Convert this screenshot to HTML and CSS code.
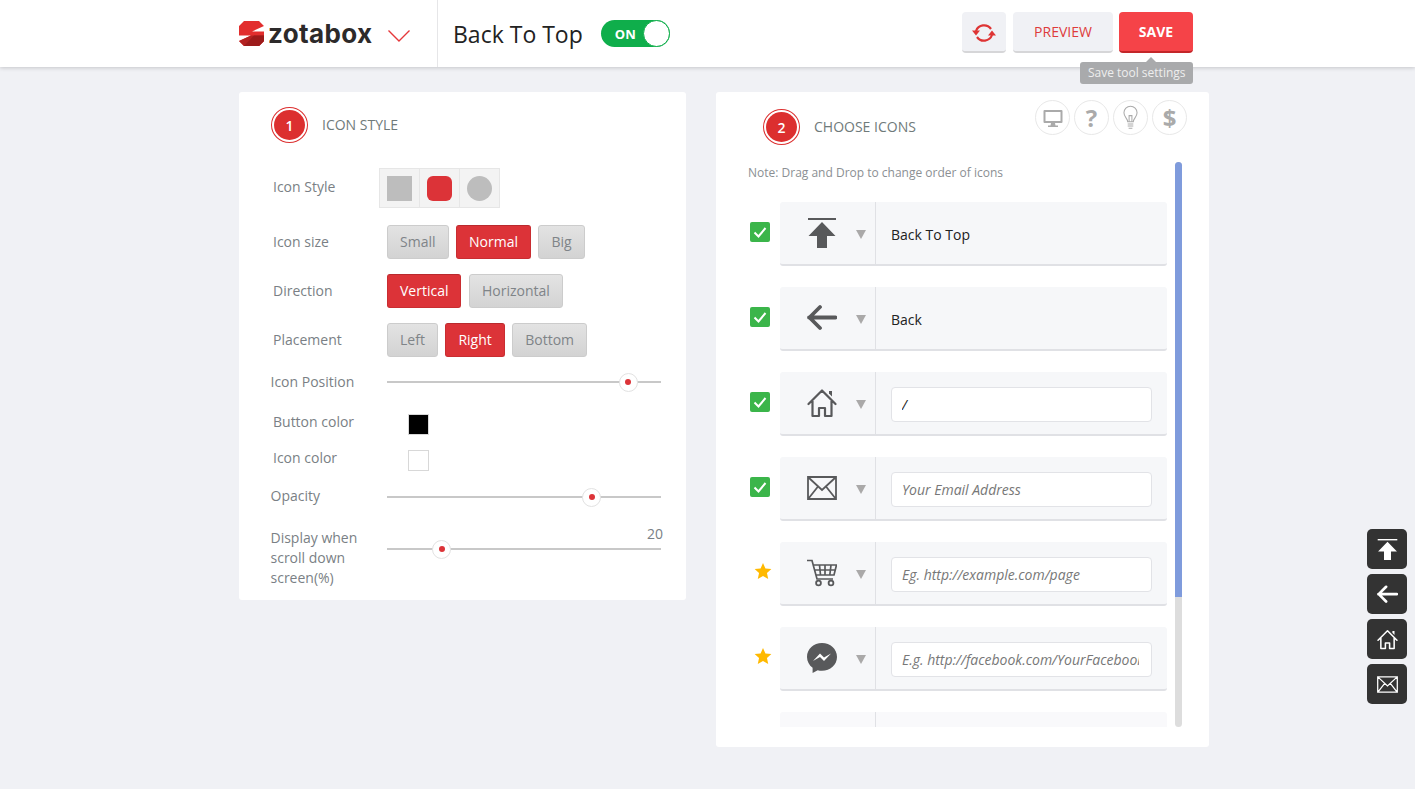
FILE: index.html
```html
<!DOCTYPE html>
<html lang="en">
<head>
<meta charset="utf-8">
<title>Back To Top</title>
<link rel="stylesheet" href="styles.css">
</head>
<body>
<svg class="defs" aria-hidden="true">
  <symbol id="i-top" viewBox="0 0 30 30"><rect x="1" y="0" width="28" height="2"/><path d="M15 4 L28.5 18 H20 V30 H10 V18 H1.500Z"/></symbol>
  <symbol id="i-back" viewBox="0 0 30 30"><path d="M2 14.500 H28.500 M13 4 L2.500 14.500 L13 25" fill="none" stroke="currentColor" stroke-width="3.800" stroke-linecap="round" stroke-linejoin="round"/></symbol>
  <symbol id="i-home" viewBox="0 0 30 30"><path d="M1.500 16 L15 2.500 L28.500 16 M5.500 13 V28 H12 V20 H18 V28 H24.500 V13" fill="none" stroke="currentColor" stroke-width="2.200" stroke-linejoin="round" stroke-linecap="round"/><path d="M22 3 H25 V8.500 L22 5.500Z"/></symbol>
  <symbol id="i-mail" viewBox="0 0 30 30"><path d="M1 4 H29 V26 H1Z M1.500 4.500 L15 17 L28.500 4.500 M1.500 25.500 L11 13.500 M28.500 25.500 L19 13.500" fill="none" stroke="currentColor" stroke-width="1.800"/></symbol>
  <symbol id="i-cart" viewBox="0 0 30 30"><path d="M0 2.500 H5 L10 21 H26 M6 7 H29.500 L27 17 H8.500 M12.500 7 L13.500 17 M18 7 V17 M24 7 L22.800 17 M7.500 12 H28" fill="none" stroke="currentColor" stroke-width="1.700"/><circle cx="11.500" cy="25" r="2.400" fill="none" stroke="currentColor" stroke-width="1.800"/><circle cx="24" cy="25" r="2.400" fill="none" stroke="currentColor" stroke-width="1.800"/></symbol>
  <symbol id="i-msg" viewBox="0 0 30 30"><path d="M15 0 C6.700 0 0 6.200 0 13.900 C0 18.300 2.200 22.100 5.600 24.700 V30 L10.700 27.200 C12 27.600 13.500 27.800 15 27.800 C23.300 27.800 30 21.600 30 13.900 C30 6.200 23.300 0 15 0Z"/><path d="M6 18 L13 10.500 L17 14.500 L24 10.500 L17 18 L13 14 Z" fill="#fff"/></symbol>
  <symbol id="i-star" viewBox="0 0 20 20"><path d="M10 1 L12.700 7.100 L19.300 7.800 L14.400 12.300 L15.800 18.900 L10 15.500 L4.200 18.900 L5.600 12.300 L0.700 7.800 L7.300 7.100Z"/></symbol>
</svg>

<header class="topbar">
  <div class="brand">
    <svg class="logo-mark" viewBox="0 0 25 25"><path d="M5 0 H20 L25 5 L13 10.500 H25 V20 L20 25 H5 L0 20 L12 14.500 H0 V5Z" fill="#e22e2e"/><path d="M5 25 L0 20 L12 14.500 H25 V20 L20 25Z" fill="#b32222"/><path d="M5 25 L15 14.500 H25 V20 L20 25Z" fill="#9c1b1b"/></svg>
    <span class="logo-text">zotabox</span>
    <svg class="logo-caret" viewBox="0 0 22 12"><path d="M0.500 0.500 L11 11 L21.500 0.500" fill="none" stroke="#e5383b" stroke-width="1.400"/></svg>
  </div>
  <div class="tool">
    <span class="tool-name">Back To Top</span>
    <div class="toggle"><span class="toggle-label">ON</span><span class="toggle-knob"></span></div>
  </div>
  <div class="actions">
    <button class="act act-icon" type="button">
      <svg viewBox="0 0 24 22" width="24" height="22"><path d="M4 9 A8.500 8.500 0 0 1 19 7 M20 13 A8.500 8.500 0 0 1 5 15" fill="none" stroke="#de3434" stroke-width="2.200"/><path d="M0 8.500 H8 L4 13.500Z M16 13.500 H24 L20 8.500Z" fill="#de3434"/></svg>
    </button>
    <button class="act act-preview" type="button">PREVIEW</button>
    <div class="save-wrap">
      <button class="act act-save" type="button">SAVE</button>
      <div class="tip">Save tool settings</div>
    </div>
  </div>
</header>

<main class="page">
  <section class="card card-left">
    <div class="step"><span class="step-num">1</span><h2 class="step-title">ICON STYLE</h2></div>

    <div class="row row-style">
      <span class="lbl lbl-style">Icon Style</span>
      <div class="styles">
        <span class="style-cell"><i class="shape shape-square"></i></span>
        <span class="style-cell"><i class="shape shape-round"></i></span>
        <span class="style-cell"><i class="shape shape-circle"></i></span>
      </div>
    </div>

    <div class="row row-btn row-first">
      <span class="lbl">Icon size</span>
      <div class="group"><button class="opt" type="button">Small</button><button class="opt on" type="button">Normal</button><button class="opt" type="button">Big</button></div>
    </div>
    <div class="row row-btn">
      <span class="lbl">Direction</span>
      <div class="group"><button class="opt on" type="button">Vertical</button><button class="opt" type="button">Horizontal</button></div>
    </div>
    <div class="row row-btn">
      <span class="lbl">Placement</span>
      <div class="group"><button class="opt" type="button">Left</button><button class="opt on" type="button">Right</button><button class="opt" type="button">Bottom</button></div>
    </div>

    <div class="row row-slider row-position">
      <span class="lbl-slider">Icon Position</span>
      <div class="track"><span class="thumb" style="left:88%"></span></div>
    </div>

    <div class="row row-color row-button-color">
      <span class="lbl lbl-color">Button color</span><span class="swatch swatch-black"></span>
    </div>
    <div class="row row-color row-icon-color">
      <span class="lbl lbl-color">Icon color</span><span class="swatch"></span>
    </div>

    <div class="row row-slider row-opacity">
      <span class="lbl-slider">Opacity</span>
      <div class="track"><span class="thumb" style="left:74.8%"></span></div>
    </div>

    <div class="row row-slider row-display">
      <span class="lbl-slider">Display when scroll down screen(%)</span>
      <div class="track track-top"><span class="value">20</span><span class="thumb" style="left:20%"></span></div>
    </div>
  </section>

  <section class="card card-right">
    <div class="right-head">
      <div class="step step-right"><span class="step-num">2</span><h2 class="step-title">CHOOSE ICONS</h2></div>
      <div class="helps">
        <span class="help"><svg viewBox="0 0 20 20" width="20" height="20"><path d="M1.500 2 H18.500 Q19.500 2 19.500 3 V14 Q19.500 15 18.500 15 H1.500 Q0.500 15 0.500 14 V3 Q0.500 2 1.500 2Z M2.500 4 V13 H17.500 V4Z" fill="#aaa" fill-rule="evenodd"/><path d="M8 15 H12 L12.500 17.500 H15 V19 H5 V17.500 H7.500Z" fill="#aaa"/></svg></span>
        <span class="help help-glyph">?</span>
        <span class="help"><svg viewBox="0 0 16 26" width="15" height="25"><path d="M5 17.500 C5 14 1 12.500 1 8 A7 7 0 0 1 15 8 C15 12.500 11 14 11 17.500Z M6.500 17 V11 H9.500 V17 M5 20 H11 M5 22 H11 M6 24.500 H10" fill="none" stroke="#aaa" stroke-width="1.100"/></svg></span>
        <span class="help help-glyph">$</span>
      </div>
    </div>

    <div class="scroll-area">
      <div class="scroll-content">
        <p class="note">Note: Drag and Drop to change order of icons</p>
        <div class="items">
          <div class="item">
            <span class="mark check"><svg viewBox="0 0 20 20" width="20" height="20"><path d="M4.500 10.500 L8.500 14.500 L15.500 6" fill="none" stroke="#fff" stroke-width="2"/></svg></span>
            <div class="bar">
              <div class="bar-icon"><svg class="ico"><use href="#i-top"/></svg><span class="tri"></span></div>
              <div class="bar-field"><span class="field-text">Back To Top</span></div>
            </div>
          </div>
          <div class="item">
            <span class="mark check"><svg viewBox="0 0 20 20" width="20" height="20"><path d="M4.500 10.500 L8.500 14.500 L15.500 6" fill="none" stroke="#fff" stroke-width="2"/></svg></span>
            <div class="bar">
              <div class="bar-icon"><svg class="ico"><use href="#i-back"/></svg><span class="tri"></span></div>
              <div class="bar-field"><span class="field-text">Back</span></div>
            </div>
          </div>
          <div class="item">
            <span class="mark check"><svg viewBox="0 0 20 20" width="20" height="20"><path d="M4.500 10.500 L8.500 14.500 L15.500 6" fill="none" stroke="#fff" stroke-width="2"/></svg></span>
            <div class="bar">
              <div class="bar-icon"><svg class="ico"><use href="#i-home"/></svg><span class="tri"></span></div>
              <div class="bar-field"><input class="input input-filled" value="/"></div>
            </div>
          </div>
          <div class="item">
            <span class="mark check"><svg viewBox="0 0 20 20" width="20" height="20"><path d="M4.500 10.500 L8.500 14.500 L15.500 6" fill="none" stroke="#fff" stroke-width="2"/></svg></span>
            <div class="bar">
              <div class="bar-icon"><svg class="ico"><use href="#i-mail"/></svg><span class="tri"></span></div>
              <div class="bar-field"><input class="input" placeholder="Your Email Address"></div>
            </div>
          </div>
          <div class="item">
            <span class="mark star"><svg class="star-ico"><use href="#i-star"/></svg></span>
            <div class="bar">
              <div class="bar-icon"><svg class="ico"><use href="#i-cart"/></svg><span class="tri"></span></div>
              <div class="bar-field"><input class="input" placeholder="Eg. http://example.com/page"></div>
            </div>
          </div>
          <div class="item">
            <span class="mark star"><svg class="star-ico"><use href="#i-star"/></svg></span>
            <div class="bar">
              <div class="bar-icon"><svg class="ico"><use href="#i-msg"/></svg><span class="tri"></span></div>
              <div class="bar-field"><input class="input" placeholder="E.g. http://facebook.com/YourFacebookPage"></div>
            </div>
          </div>
          <div class="item">
            <span class="mark"></span>
            <div class="bar bar-faded">
              <div class="bar-icon"></div>
              <div class="bar-field"></div>
            </div>
          </div>
        </div>
      </div>
      <div class="scrollbar"><div class="scrollbar-thumb"></div></div>
    </div>
  </section>
</main>

<nav class="float-icons">
  <a class="float-btn"><svg class="float-ico"><use href="#i-top"/></svg></a>
  <a class="float-btn"><svg class="float-ico"><use href="#i-back"/></svg></a>
  <a class="float-btn"><svg class="float-ico"><use href="#i-home"/></svg></a>
  <a class="float-btn"><svg class="float-ico"><use href="#i-mail"/></svg></a>
</nav>
</body>
</html>
```

FILE: styles.css
```css
* { box-sizing: border-box; }
html, body { margin: 0; height: 100%; }
body {
  background: #f0f1f5;
  font-family: "Open Sans", "Noto Sans", sans-serif;
  font-size: 14px;
  color: #7a7f85;
  overflow: hidden;
}
.defs { display: none; }

/* Top bar */
.topbar {
  display: flex;
  align-items: stretch;
  height: 67px;
  padding: 0 222px 0 239px;
  background: #fff;
  box-shadow: 0 1px 4px rgba(0, 0, 0, .18);
  position: relative;
  z-index: 2;
}
.brand {
  display: flex;
  align-items: center;
  width: 199px;
  border-right: 1px solid #e6e6e8;
}
.logo-mark { width: 25px; height: 25px; flex: none; }
.logo-text {
  margin-left: 4px;
  font-family: "Inter", sans-serif;
  font-weight: 700;
  font-size: 26px;
  letter-spacing: .35px;
  color: #2d2a2a;
}
.logo-caret { width: 22px; height: 12px; margin: 4px 0 0 16px; }
.tool { display: flex; align-items: center; padding-left: 15px; }
.tool-name { font-size: 23px; color: #222; }
.toggle {
  display: flex;
  align-items: center;
  justify-content: space-between;
  width: 69px;
  height: 27px;
  margin-left: 18px;
  padding-left: 14px;
  background: #0fae4b;
  border-radius: 14px;
}
.toggle-label { color: #fff; font-size: 13px; font-weight: 700; }
.toggle-knob {
  width: 27px;
  height: 27px;
  background: #fff;
  border: 1px solid #0fae4b;
  border-radius: 50%;
}
.actions {
  display: flex;
  gap: 6px;
  margin-left: auto;
  padding-top: 12px;
}
.act {
  height: 41px;
  border: 0;
  border-radius: 4px;
  font-family: inherit;
  cursor: pointer;
}
.act-icon, .act-preview {
  background: #f0f1f5;
  border-bottom: 2px solid #d6d6d8;
}
.act-icon { width: 44px; padding: 2px 0 0; display: flex; align-items: center; justify-content: center; margin-right: 1px; }
.act-preview { width: 100px; color: #de3b3b; font-size: 14px; }
.act-save {
  width: 74px;
  background: #f54348;
  border-bottom: 2px solid #c32629;
  color: #fff;
  font-size: 14px;
  font-weight: 700;
}
.save-wrap { position: relative; height: 41px; }
.tip {
  position: absolute;
  top: 50px;
  right: 0;
  padding: 0 7.5px;
  height: 22px;
  line-height: 21px;
  background: #a9aaac;
  border-radius: 3px;
  color: #eee;
  font-size: 12px;
  white-space: nowrap;
}
.tip::before {
  content: "";
  position: absolute;
  top: -5px;
  left: 66px;
  border: 5px solid transparent;
  border-top: 0;
  border-bottom-color: #a9aaac;
}

/* Cards */
.page {
  display: flex;
  align-items: flex-start;
  gap: 30px;
  padding: 25px 0 0 239px;
}
.card { background: #fff; border-radius: 3px; }
.card-left { width: 447px; height: 508px; padding-top: 15px; }
.card-right { width: 493px; height: 655px; }

.step { display: flex; align-items: center; height: 36px; margin-left: 32px; }
.step-num {
  width: 37px;
  height: 36px;
  display: flex;
  align-items: center;
  justify-content: center;
  padding: 2px;
  border: 1px solid #dc2f2f;
  border-radius: 50%;
  background: #dc2f2f content-box;
  color: #fff;
  font-size: 14px;
  font-weight: 600;
}
.step-title {
  margin: 0 0 2px 14px;
  font-size: 14px;
  font-weight: 500;
  color: #6f7a7a;
}

/* Left rows */
.row { display: flex; align-items: center; }
.lbl { width: 114px; margin-left: 34px; flex: none; padding-bottom: 2px; }
.lbl-style { width: 106px; padding-bottom: 3px; }
.row-style { margin-top: 25px; height: 40px; }
.styles {
  display: flex;
  border: 1px solid #e6e6e6;
  background: #f3f3f3;
}
.style-cell {
  width: 40px;
  height: 38px;
  display: flex;
  align-items: center;
  justify-content: center;
}
.style-cell + .style-cell { border-left: 1px solid #e6e6e6; }
.style-cell:first-child { width: 39px; }
.shape { display: block; width: 25px; height: 25px; background: #bdbdbd; }
.shape-round { background: #dc3338; border-radius: 6px; }
.shape-circle { border-radius: 50%; }

.row-btn { height: 34px; margin-top: 15px; }
.row-first { margin-top: 17px; }
.group { display: flex; gap: 7.5px; }
.opt {
  height: 34px;
  padding: 0 12px 1px;
  border: 1px solid #ccc;
  border-radius: 3px;
  background: linear-gradient(#e3e3e3, #d3d3d3);
  color: #7f8488;
  font-family: inherit;
  font-size: 14px;
  cursor: pointer;
}
.opt.on {
  background: #dc3338;
  border-color: #c92d31;
  border-top-color: #b92a2e;
  color: #fff;
}

.row-slider { margin-left: 31.5px; }
.lbl-slider { width: 116.5px; flex: none; line-height: 20px; padding-right: 16px; }
.track {
  position: relative;
  width: 274px;
  height: 2px;
  background: #c8c8c8;
}
.thumb {
  position: absolute;
  top: 1px;
  width: 19px;
  height: 19px;
  margin: -9.5px 0 0 -9.5px;
  background: #fff;
  border: 1px solid #e2e2e2;
  border-radius: 50%;
}
.thumb::after {
  content: "";
  position: absolute;
  left: 5.5px;
  top: 5.5px;
  width: 6px;
  height: 6px;
  background: #dc3338;
  border-radius: 50%;
}
.row-position { margin-top: 15px; height: 20px; }
.row-opacity { margin-top: 16px; height: 20px; }
.row-opacity .lbl-slider { margin-top: -2px; }
.row-display { margin-top: 21px; align-items: flex-start; }
.track-top { margin-top: 20px; }
.value { position: absolute; right: -2px; top: -24px; line-height: 20px; }

.row-color { height: 21px; }
.row-button-color { margin-top: 22px; }
.row-icon-color { margin-top: 15px; }
.lbl-color { width: 135px; margin-top: -5px; }
.swatch {
  width: 21px;
  height: 21px;
  background: #fff;
  border: 1px solid #d8d8d8;
}
.swatch-black { background: #000; }

/* Right card */
.right-head {
  display: flex;
  justify-content: space-between;
  height: 70px;
  padding: 8px 22px 0 15px;
}
.step-right { align-self: flex-start; margin-top: 9px; }
.helps { display: flex; gap: 4px; }
.help {
  width: 35px;
  height: 35px;
  display: flex;
  align-items: center;
  justify-content: center;
  border: 1px solid #e8e8e8;
  border-radius: 50%;
  color: #aaa;
}
.help-glyph { font-size: 24px; font-weight: 700; }

.scroll-area { display: flex; height: 565px; margin-left: 32px; }
.scroll-content { width: 419px; overflow: hidden; }
.note { margin: 0; height: 20px; line-height: 21px; font-size: 12px; color: #8b8f93; }
.items { display: flex; flex-direction: column; gap: 21px; margin-top: 20px; }
.item { display: flex; align-items: center; gap: 10px; }
.mark {
  flex: none;
  width: 22px;
  height: 20px;
  margin-top: -4px;
  display: flex;
  align-items: center;
  justify-content: center;
}
.check svg { background: #3bb54a; border-radius: 2px; }
.check { justify-content: flex-end; }
.star-ico { width: 18px; height: 18px; fill: #ffb900; margin-right: -2px; }
.star { justify-content: flex-end; margin-top: -6px; }
.bar {
  flex: none;
  display: flex;
  width: 387px;
  height: 64px;
  background: #f6f7f9;
  border-bottom: 2px solid #e0e1e5;
  border-radius: 3px;
}
.bar-faded { background: #f9f9fb; }
.bar-icon {
  display: flex;
  align-items: center;
  width: 96px;
  padding-left: 27px;
  border-right: 1px solid #e0e1e5;
}
.ico { width: 30px; height: 30px; color: #58595b; fill: #58595b; }
.tri {
  margin: 3px 0 0 19px;
  border: 5px solid transparent;
  border-top: 9px solid #aaa9a9;
  border-bottom: 0;
}
.bar-field {
  flex: 1;
  display: flex;
  align-items: center;
  padding: 0 15px;
}
.field-text { color: #222; margin-top: 2px; }
.input {
  width: 261px;
  height: 35px;
  margin-top: 3px;
  padding: 0 12px 0 10px;
  background: #fff;
  border: 1px solid #e2e3e7;
  border-radius: 4px;
  font-family: inherit;
  font-size: 14px;
  font-style: italic;
  color: #222;
  outline: 0;
}
.input::placeholder { color: #777; opacity: 1; }

.scrollbar {
  width: 7px;
  margin-left: 8px;
  background: #ddd;
  border-radius: 4px;
}
.scrollbar-thumb {
  height: 435px;
  background: #7f9bdc;
  border-radius: 4px 4px 0 0;
}

/* Floating preview */
.float-icons {
  position: fixed;
  left: 1367px;
  top: 529px;
  display: flex;
  flex-direction: column;
  gap: 5px;
}
.float-btn {
  width: 40px;
  height: 40px;
  display: flex;
  align-items: center;
  justify-content: center;
  background: #333;
  border-radius: 5px;
}
.float-ico { width: 21px; height: 21px; color: #fff; fill: #fff; }
```
